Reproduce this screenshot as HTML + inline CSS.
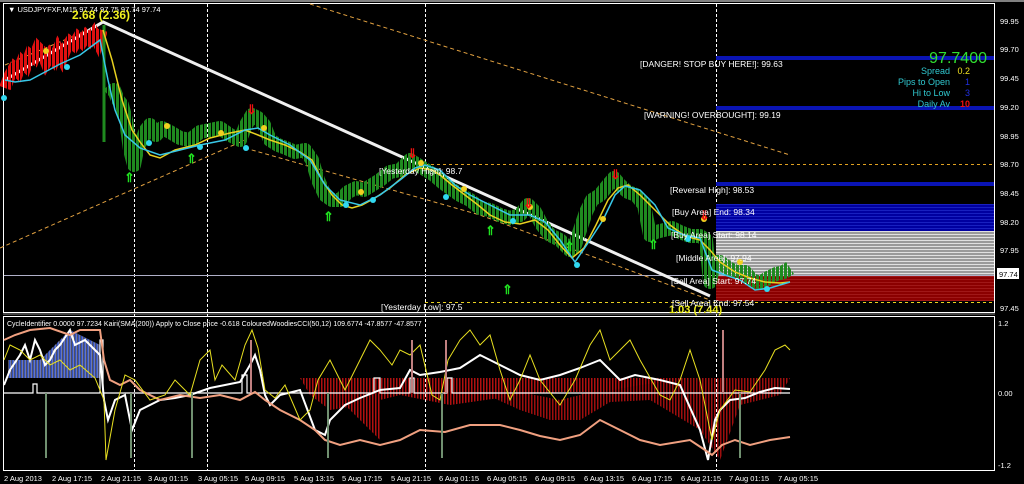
<!DOCTYPE html>
<html><head><meta charset="utf-8"><style>
html,body{margin:0;padding:0;background:#000;width:1024px;height:484px;overflow:hidden}
svg{display:block}
text{font-family:"Liberation Sans",sans-serif}
</style></head><body>
<svg width="1024" height="484" viewBox="0 0 1024 484" xmlns="http://www.w3.org/2000/svg">
<defs>
<pattern id="gs" width="4" height="3" patternUnits="userSpaceOnUse"><rect width="4" height="3" fill="#9a9a9a"/><rect width="4" height="1" fill="#e0e0e0"/></pattern>
<pattern id="rs" width="4" height="3" patternUnits="userSpaceOnUse"><rect width="4" height="3" fill="#8b0000"/><rect width="4" height="1" fill="#a01818"/></pattern>
<pattern id="bs" width="4" height="3" patternUnits="userSpaceOnUse"><rect width="4" height="3" fill="#0000a0"/><rect width="4" height="1" fill="#1820c0"/></pattern>
<pattern id="hist" width="3" height="10" patternUnits="userSpaceOnUse"><rect width="1.5" height="10" fill="#b01010"/></pattern>
<pattern id="histb" width="3" height="10" patternUnits="userSpaceOnUse"><rect width="1.5" height="10" fill="#3050c0"/><rect x="1.5" width="1" height="10" fill="#a0a0c0"/></pattern>
<pattern id="gbar" width="4" height="10" patternUnits="userSpaceOnUse"><rect width="3" height="10" fill="#1f8a1f"/></pattern>
<pattern id="rbar" width="4" height="10" patternUnits="userSpaceOnUse"><rect width="3" height="10" fill="#e01010"/></pattern>
</defs>
<rect width="1024" height="484" fill="#000"/>
<rect x="0" y="0" width="1024" height="2" fill="#808080"/>
<rect x="3.5" y="3.5" width="991" height="309" fill="none" stroke="#fff" stroke-width="1"/>
<rect x="3.5" y="316.5" width="991" height="154" fill="none" stroke="#fff" stroke-width="1"/>
<line x1="3" y1="314" x2="995" y2="314" stroke="#888" stroke-width="1"/>
<g stroke="#fff" stroke-dasharray="3,2" stroke-width="1">
<line x1="134.5" y1="4" x2="134.5" y2="470"/><line x1="207.5" y1="4" x2="207.5" y2="470"/>
<line x1="425.5" y1="4" x2="425.5" y2="470"/><line x1="716.5" y1="4" x2="716.5" y2="470"/>
</g>
<rect x="716" y="56" width="278" height="4" fill="#0a14b4"/>
<rect x="716" y="106" width="278" height="4" fill="#0a14b4"/>
<rect x="716" y="182" width="278" height="4" fill="#0a14b4"/>
<rect x="716" y="204" width="278" height="27" fill="url(#bs)"/>
<rect x="716" y="231" width="278" height="45" fill="url(#gs)"/>
<rect x="716" y="276" width="278" height="25" fill="url(#rs)"/>
<line x1="4" y1="275.5" x2="994" y2="275.5" stroke="#b0b0c8" stroke-width="1"/>
<line x1="425" y1="164.5" x2="994" y2="164.5" stroke="#e0a020" stroke-dasharray="3,3"/>
<line x1="425" y1="302.5" x2="994" y2="302.5" stroke="#e8d020" stroke-dasharray="3,3"/>
<g stroke="#e0a040" stroke-width="1" stroke-dasharray="4,3" fill="none">
<polyline points="0,248 245,140"/>
<polyline points="245,148 480,215 710,300"/>
<polyline points="310,4 790,155"/>
<polyline points="5,65 100,25"/>
</g>
<polyline points="5,80 103,22 710,296" fill="none" stroke="#f0f0f0" stroke-width="3"/>
<polyline points="5,88 10,75 14,68 18,72 22,62 26,66 30,55 34,58 38,48 42,52 46,62 50,55 54,60 58,50 62,58 66,48 70,42 74,45 78,38 82,42 86,36 90,40 94,34 98,42 102,30" fill="none" stroke="url(#rbar)" stroke-width="12"/>
<line x1="104" y1="25" x2="104" y2="142" stroke="#1f8a1f" stroke-width="3"/>
<polyline points="108,95 114,90 118,100 122,105 126,120 130,150 134,165 138,145 142,140 146,130 150,125 156,135 162,128 170,132 180,138 190,140 200,132 210,130 220,128 230,135 240,140 246,125 252,115 258,118 264,125 270,140 278,145 286,148 295,152 305,150 312,160 318,180 325,195 332,200 340,200 348,192 356,188 364,190 372,185 380,180 390,172 400,170 410,160 418,165 426,170 434,175 442,182 450,188 460,195 470,200 480,208 490,210 500,215 510,218 520,215 528,205 535,212 542,225 550,235 560,240 570,250 575,245 580,230 586,212 592,200 600,195 608,185 614,178 620,185 628,192 636,195 644,205 650,235 656,232 664,230 672,228 680,232 690,236 700,236 706,240 710,282 714,262 720,262 728,268 736,272 745,272 752,280 760,283 768,278 776,274 784,272 790,268" fill="none" stroke="url(#gbar)" stroke-width="14" stroke-linejoin="round"/>
<polyline points="103,30 112,60 122,100 132,130 140,142 150,155 160,158 175,150 195,145 210,138 230,133 245,130 258,135 270,140 285,145 300,152 312,160 322,180 332,195 342,205 352,208 362,205 375,198 390,188 405,175 420,168 432,170 440,175 452,185 465,195 478,205 490,215 505,222 520,224 535,220 548,230 560,245 572,258 584,248 596,225 608,200 618,188 628,185 640,195 650,205 660,215 670,225 685,236 700,240 710,250 720,262 735,272 750,278 765,282 780,283 790,282" fill="none" stroke="#e8d020" stroke-width="1.5"/>
<polyline points="5,80 15,82 30,80 45,72 60,64 80,55 100,40 108,80 115,110 125,135 140,148 160,155 180,150 200,145 225,140 245,130 258,128 270,135 290,145 310,160 325,185 340,200 360,205 380,195 400,180 415,168 425,165 440,170 455,185 470,195 490,205 510,215 530,215 545,222 560,240 575,262 590,240 603,220 615,195 625,186 640,190 655,205 668,228 684,235 700,238 712,270 725,275 740,280 755,290 770,288 790,282" fill="none" stroke="#38c8e8" stroke-width="1.5"/>
<g fill="#f0d020"><circle cx="46" cy="51" r="3"/><circle cx="167" cy="126" r="3"/><circle cx="221" cy="133" r="3"/><circle cx="264" cy="128" r="3"/><circle cx="361" cy="192" r="3"/><circle cx="421" cy="163" r="3"/><circle cx="464" cy="189" r="3"/><circle cx="530" cy="207" r="3"/><circle cx="603" cy="219" r="3"/><circle cx="704" cy="219" r="3"/><circle cx="740" cy="262" r="3"/></g>
<g fill="#30d8f0"><circle cx="4" cy="98" r="3"/><circle cx="67" cy="67" r="3"/><circle cx="149" cy="143" r="3"/><circle cx="200" cy="147" r="3"/><circle cx="246" cy="148" r="3"/><circle cx="346" cy="205" r="3"/><circle cx="373" cy="200" r="3"/><circle cx="446" cy="197" r="3"/><circle cx="513" cy="221" r="3"/><circle cx="577" cy="265" r="3"/><circle cx="688" cy="239" r="3"/><circle cx="767" cy="289" r="3"/></g>
<g fill="#20e020" font-size="13" font-weight="bold">
<text x="124" y="182">⇑</text><text x="186" y="163">⇑</text><text x="323" y="221">⇑</text><text x="485" y="235">⇑</text><text x="502" y="294">⇑</text><text x="564" y="251">⇑</text><text x="648" y="249">⇑</text>
</g>
<g fill="#f01010" font-size="13" font-weight="bold">
<text x="246" y="114">⇓</text><text x="407" y="158">⇓</text><text x="523" y="208">⇓</text><text x="610" y="179">⇓</text><text x="699" y="220">⇓</text>
</g>
<text x="8" y="12" fill="#fff" font-size="7.5">▼ USDJPYFXF,M15  97.74 97.75 97.74 97.74</text>
<text x="72" y="19" fill="#f0f020" font-size="12" font-weight="bold">2.68 (2.36)</text>
<text x="669" y="313" fill="#f0f020" font-size="11" font-weight="bold">1.03 (7.44)</text>
<g fill="#fff" font-size="8.5">
<text x="640" y="67">[DANGER! STOP BUY HERE!]: 99.63</text>
<text x="644" y="118">[WARNING! OVERBOUGHT]: 99.19</text>
<text x="379" y="174">[Yesterday High]: 98.7</text>
<text x="670" y="193">[Reversal High]: 98.53</text>
<text x="672" y="215">[Buy Area] End: 98.34</text>
<text x="671" y="238">[Buy Area] Start: 98.14</text>
<text x="676" y="261">[Middle Area]: 97.94</text>
<text x="671" y="284">[Sell Area] Start: 97.74</text>
<text x="672" y="306">[Sell Area] End: 97.54</text>
<text x="381" y="310">[Yesterday Low]: 97.5</text>
</g>
<text x="987" y="63" fill="#30e030" font-size="16" text-anchor="end">97.7400</text>
<g font-size="9" text-anchor="end">
<text x="950" y="74" fill="#30c8d0">Spread</text><text x="970" y="74" fill="#f0e020">0.2</text>
<text x="950" y="85" fill="#30c8d0">Pips to Open</text><text x="970" y="85" fill="#2030e0">1</text>
<text x="950" y="96" fill="#30c8d0">Hi to Low</text><text x="970" y="96" fill="#2030e0">3</text>
<text x="950" y="107" fill="#30c8d0">Daily Av</text><text x="970" y="107" fill="#f01010" font-weight="bold">10</text>
</g>
<g fill="#fff" font-size="7.5">
<text x="1000" y="24">99.95</text><text x="1000" y="52">99.70</text><text x="1000" y="81">99.45</text><text x="1000" y="110">99.20</text><text x="1000" y="139">98.95</text><text x="1000" y="167">98.70</text><text x="1000" y="196">98.45</text><text x="1000" y="225">98.20</text><text x="1000" y="253">97.95</text><text x="1000" y="311">97.45</text>
<text x="998" y="326">1.2</text><text x="998" y="396">0.00</text><text x="998" y="468">-1.2</text>
</g>
<rect x="997" y="268" width="22" height="11" fill="#fff"/><text x="999" y="277" fill="#000" font-size="7.5">97.74</text>
<text x="7" y="326" fill="#fff" font-size="7">CycleIdentifier 0.0000 97.7234  Kairi(SMA(200)) Apply to Close price -0.618  ColouredWoodiesCCI(50,12) 109.6774 -47.8577 -47.8577</text>
<path d="M8,378 L100,378 L100,345 L70,330 L40,360 L8,360Z" fill="url(#histb)"/>
<path d="M110,378 L300,378 L310,395 L330,410 L360,405 L400,395 L450,405 L520,395 L560,392 L600,392 L640,385 L680,380 L700,378Z" fill="url(#hist)"/>
<path d="M320,378 L380,378 L380,440 L360,420 L340,400Z" fill="url(#hist)"/>
<path d="M450,378 L480,378 L500,380 L520,392 L560,400 L580,395 L600,385 L700,378 L720,378 L790,378 L780,395 L740,405 L720,460 L700,430 L650,400 L610,402 L580,420 L550,420 L520,410Z" fill="url(#hist)" opacity="0.9"/>
<polyline points="4,393 33,393 33,384 37,384 37,393 100,393 100,340 103,340 103,393 242,393 242,375 247,375 247,393 374,393 374,378 380,378 380,393 410,393 410,378 414,378 414,393 447,393 447,378 452,378 452,393 790,393" fill="none" stroke="#fff" stroke-width="1.2"/>
<polyline points="4,385 10,370 20,355 25,345 30,360 35,340 40,350 45,365 50,360 55,350 60,345 70,330 75,345 85,340 95,350 100,355 104,400 108,420 115,400 125,395 132,430 140,410 150,405 160,400 175,398 190,395 210,388 225,385 240,382 250,365 255,355 260,370 265,395 270,405 280,395 300,390 315,430 325,435 330,420 345,405 360,398 380,390 400,388 410,370 420,375 440,372 460,368 480,355 500,365 520,375 540,380 560,375 580,368 600,360 620,380 635,375 650,378 660,380 680,385 700,430 708,460 715,420 720,410 730,400 745,398 760,392 775,388 790,389" fill="none" stroke="#fff" stroke-width="2"/>
<polyline points="4,340 15,335 30,330 50,328 70,335 80,330 100,330 104,360 110,380 120,385 130,380 140,390 160,400 180,395 200,398 220,395 240,400 255,392 265,400 280,410 300,420 315,430 325,440 340,445 360,440 380,445 400,440 420,430 445,432 470,425 500,425 520,430 540,436 560,440 580,435 600,420 620,430 640,440 660,445 690,440 705,450 712,455 722,445 735,440 750,445 770,440 790,437" fill="none" stroke="#f0a080" stroke-width="2"/>
<polyline points="4,360 10,345 20,350 30,360 40,355 50,365 60,360 70,370 80,365 95,378 104,400 106,460 115,410 125,375 135,380 150,400 165,395 175,380 190,395 200,360 210,350 215,380 222,365 235,380 245,345 252,330 258,348 265,390 275,398 285,385 300,420 310,410 318,380 330,360 345,390 360,360 370,340 380,350 392,365 400,350 410,355 420,345 432,395 440,400 448,360 460,340 470,330 480,345 490,335 500,370 510,400 520,380 530,355 540,380 560,405 575,380 590,345 600,330 610,360 620,350 630,340 640,360 660,395 670,400 680,380 690,350 700,380 708,420 712,440 720,410 735,390 750,392 765,370 775,350 785,345 790,350" fill="none" stroke="#e8e020" stroke-width="1"/>
<g stroke="#c08080" stroke-width="2"><line x1="251" y1="340" x2="251" y2="393"/><line x1="412" y1="340" x2="412" y2="393"/><line x1="446" y1="340" x2="446" y2="393"/><line x1="723" y1="330" x2="723" y2="393"/></g>
<g stroke="#709070" stroke-width="2"><line x1="46" y1="393" x2="46" y2="458"/><line x1="131" y1="393" x2="131" y2="458"/><line x1="192" y1="393" x2="192" y2="458"/><line x1="328" y1="393" x2="328" y2="458"/><line x1="442" y1="393" x2="442" y2="458"/><line x1="740" y1="393" x2="740" y2="458"/></g>
<g fill="#fff" font-size="7.5">
<text x="4" y="481">2 Aug 2013</text><text x="52" y="481">2 Aug 17:15</text><text x="101" y="481">2 Aug 21:15</text><text x="148" y="481">3 Aug 01:15</text><text x="198" y="481">3 Aug 05:15</text><text x="245" y="481">5 Aug 09:15</text><text x="294" y="481">5 Aug 13:15</text><text x="342" y="481">5 Aug 17:15</text><text x="391" y="481">5 Aug 21:15</text><text x="439" y="481">6 Aug 01:15</text><text x="487" y="481">6 Aug 05:15</text><text x="535" y="481">6 Aug 09:15</text><text x="584" y="481">6 Aug 13:15</text><text x="632" y="481">6 Aug 17:15</text><text x="681" y="481">6 Aug 21:15</text><text x="729" y="481">7 Aug 01:15</text><text x="778" y="481">7 Aug 05:15</text>
</g>
</svg>
</body></html>
